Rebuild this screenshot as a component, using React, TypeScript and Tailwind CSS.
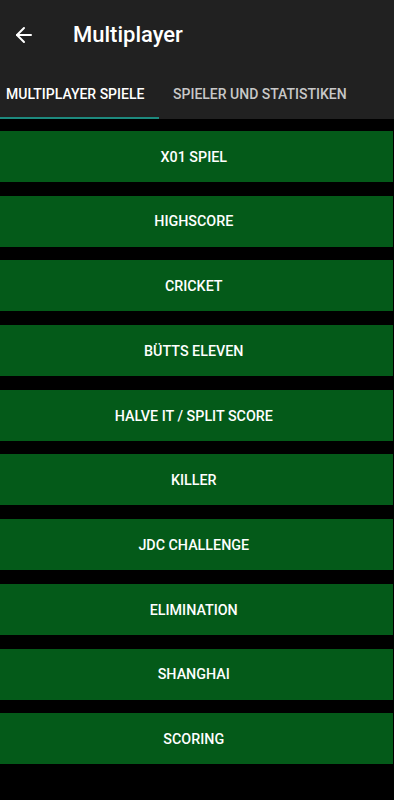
import { ArrowLeft } from "lucide-react";

const games = [
  "X01 SPIEL",
  "HIGHSCORE",
  "CRICKET",
  "BÜTTS ELEVEN",
  "HALVE IT / SPLIT SCORE",
  "KILLER",
  "JDC CHALLENGE",
  "ELIMINATION",
  "SHANGHAI",
  "SCORING",
];

export default function App() {
  return (
    <div className="min-h-[800px] w-[394px] bg-black font-['Roboto',sans-serif]">
      <header className="bg-[#212121]">
        <div className="flex h-[69px] items-center">
          <ArrowLeft className="ml-[12px] text-white" size={24} strokeWidth={2} />
          <h1 className="ml-[37px] text-[22px] font-medium text-white">Multiplayer</h1>
        </div>
        <div className="flex h-[50px] text-[14px] font-medium">
          <div className="relative flex w-[159px] items-center pl-[6px] text-white">
            MULTIPLAYER SPIELE
            <div className="absolute bottom-0 left-0 h-[2.5px] w-full bg-[#1d8a7e]" />
          </div>
          <div className="flex flex-1 items-center pl-[14px] text-[#c8c8c8]">SPIELER UND STATISTIKEN</div>
        </div>
      </header>
      <main className="flex flex-col gap-[13.7px] pt-[12px] pr-[1.5px]">
        {games.map((game) => (
          <button
            key={game}
            className="flex h-[51px] items-center justify-center bg-[#045a19] pt-[2px] pr-[5px] text-[14.3px] font-medium text-white"
          >
            {game}
          </button>
        ))}
      </main>
    </div>
  );
}
